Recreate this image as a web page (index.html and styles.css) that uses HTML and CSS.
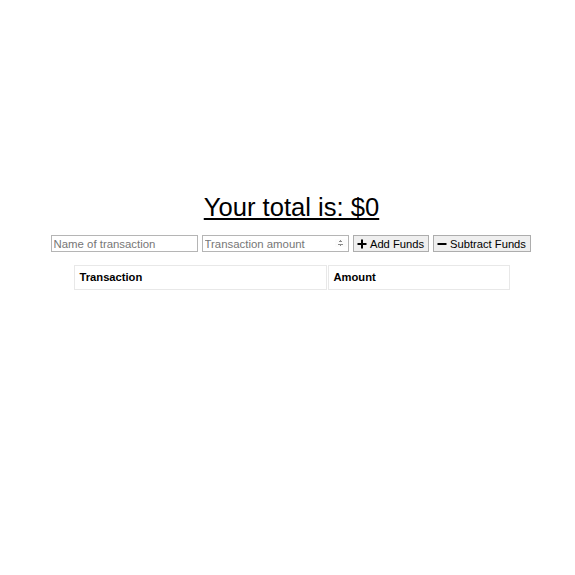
FILE: index.html
```html
<!DOCTYPE html>
<html lang="en">
<head>
<meta charset="utf-8">
<title>Budget Tracker</title>
<link rel="stylesheet" href="styles.css">
</head>
<body>
<div class="wrapper">
  <h1 class="total">Your total is: $<span class="total-value">0</span></h1>
  <form class="form">
    <input class="field field-name" type="text" placeholder="Name of transaction">
    <input class="field field-amount" type="number" placeholder="Transaction amount">
    <button class="btn btn-add" type="button"><svg class="icon" viewBox="0 0 10 10" width="10" height="10"><path d="M5 0.5V9.5M0.5 5H9.5" stroke="#000" stroke-width="2"/></svg>Add Funds</button>
    <button class="btn btn-sub" type="button"><svg class="icon" viewBox="0 0 10 10" width="10" height="10"><path d="M0.5 5H9.5" stroke="#000" stroke-width="2"/></svg>Subtract Funds</button>
  </form>
  <table class="table">
    <thead>
      <tr><th class="col-name">Transaction</th><th class="col-amount">Amount</th></tr>
    </thead>
    <tbody></tbody>
  </table>
</div>
</body>
</html>
```
FILE: styles.css
```css
html, body {
  margin: 0;
  padding: 0;
  background: #fff;
}
body {
  font-family: "Liberation Sans", Arial, sans-serif;
  color: #000;
}
.wrapper {
  display: flex;
  flex-direction: column;
  align-items: center;
  padding: 190px 0 0 8px;
}
.total {
  margin: 0;
  font-size: 25.6px;
  font-weight: normal;
  line-height: 34px;
  text-decoration: underline;
  text-decoration-thickness: 2px;
  text-underline-offset: 2px;
}
.form {
  display: flex;
  gap: 4px;
  margin: 11px 2px 0 0;
  height: 17px;
}
.field {
  box-sizing: border-box;
  height: 17px;
  margin: 0;
  padding: 0 2px;
  border: 1px solid #b5b5b5;
  font-family: "Liberation Sans", Arial, sans-serif;
  font-size: 11.4px;
  color: #000;
  background: #fff;
  outline: none;
}
.field::placeholder {
  color: #767676;
}
.field-name {
  width: 147px;
}
.field-amount {
  width: 147px;
  padding-right: 0;
}
.field-amount::-webkit-inner-spin-button {
  opacity: 1;
  height: 11px;
  transform: scale(0.8);
}
.btn {
  box-sizing: border-box;
  height: 17px;
  margin: 0;
  padding: 0 2px;
  display: flex;
  align-items: center;
  justify-content: center;
  gap: 3px;
  white-space: nowrap;
  border: 1px solid #adadad;
  border-radius: 0;
  background: #efefef;
  font-family: "Liberation Sans", Arial, sans-serif;
  font-size: 11.2px;
  color: #000;
}
.btn-add {
  width: 76px;
}
.btn-sub {
  width: 98px;
}
.icon {
  display: block;
  flex: none;
}
.table {
  margin-top: 12px;
  width: 438px;
  border-collapse: separate;
  border-spacing: 1px;
  font-size: 11.2px;
}
.table th {
  text-align: left;
  font-weight: bold;
  padding: 5px 5px 6px;
  border: 1px solid #e8e8e8;
  line-height: 12px;
}
.col-name {
  width: 241px;
}
```
